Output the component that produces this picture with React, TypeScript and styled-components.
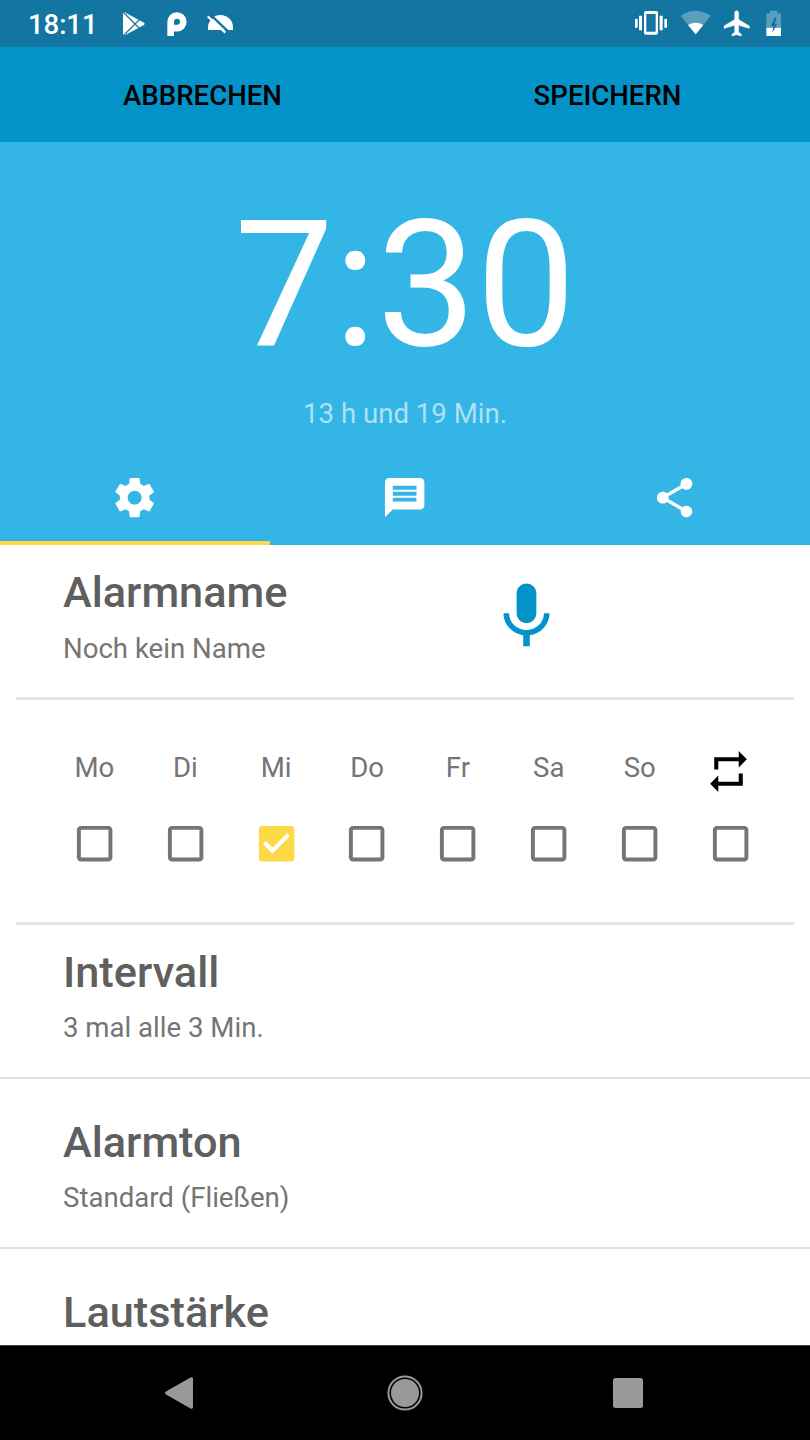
import React from "react";
import styled, { createGlobalStyle } from "styled-components";

const color = {
  status: "#1375a2",
  toolbar: "#0393c9",
  hero: "#33b5e6",
  accent: "#fdda45",
  title: "#5f5f5f",
  text: "#757575",
  divider: "#dedede",
  insetDivider: "#e4e4e4",
};

const GlobalStyle = createGlobalStyle`
  * { box-sizing: border-box; }
  body { margin: 0; background: #fff; font-family: Roboto, "Liberation Sans", sans-serif; }
  svg { display: block; flex: none; }
`;

const Screen = styled.div`
  width: 810px;
  height: 1440px;
  display: flex;
  flex-direction: column;
  overflow: hidden;
  background: #fff;
`;

const StatusBar = styled.header`
  height: 47px;
  flex: none;
  display: flex;
  justify-content: space-between;
  background: ${color.status};
  color: #fff;
`;

const StatusGroup = styled.div<{ $start?: number; $end?: number }>`
  display: flex;
  padding-left: ${(p) => p.$start ?? 0}px;
  padding-right: ${(p) => p.$end ?? 0}px;
`;

const Clock = styled.span`
  width: 92px;
  font-size: 27.6px;
  line-height: 50px;
  font-weight: 500;
  letter-spacing: -0.1px;
`;

const Toolbar = styled.div`
  height: 95px;
  flex: none;
  display: grid;
  grid-template-columns: 1fr 1fr;
  background: ${color.toolbar};
`;

const ToolbarButton = styled.button`
  border: 0;
  padding: 2px 0 0;
  background: none;
  color: #000;
  font: 500 27.6px/32px Roboto, sans-serif;
`;

const Hero = styled.section`
  height: 403px;
  flex: none;
  display: flex;
  flex-direction: column;
  align-items: center;
  background: ${color.hero};
`;

const AlarmTime = styled.div`
  margin-top: 39px;
  height: 208px;
  font-size: 177.2px;
  line-height: 208px;
  color: #fff;
`;

const Countdown = styled.div`
  margin-top: 9px;
  font-size: 27.6px;
  line-height: 32px;
  color: #ade1f6;
`;

const Tabs = styled.nav`
  width: 100%;
  margin-top: auto;
  display: grid;
  grid-template-columns: repeat(3, 1fr);
`;

const Tab = styled.div<{ $active?: boolean }>`
  height: 95px;
  display: flex;
  justify-content: center;
  padding-top: 24px;
  border-bottom: 4px solid ${(p) => (p.$active ? color.accent : "transparent")};
`;

const Content = styled.main`
  flex: 1;
  min-height: 0;
  overflow: hidden;
`;

const Row = styled.section<{ $height: number; $top: number; $inset?: boolean }>`
  height: ${(p) => p.$height}px;
  margin: 0 ${(p) => (p.$inset ? 16 : 0)}px;
  padding: ${(p) => p.$top}px ${(p) => (p.$inset ? 47 : 63)}px 0;
  display: flex;
  border-bottom: ${(p) => (p.$inset ? `3px solid ${color.insetDivider}` : `2px solid ${color.divider}`)};
`;

const RowText = styled.div<{ $width?: number }>`
  width: ${(p) => (p.$width ? `${p.$width}px` : "auto")};
`;

const RowTitle = styled.h2`
  margin: 0;
  font-size: 43.3px;
  line-height: 50px;
  font-weight: 500;
  color: ${color.title};
`;

const RowSummary = styled.p<{ $gap?: number }>`
  margin: ${(p) => p.$gap ?? 14}px 0 0;
  font-size: 27.6px;
  line-height: 32px;
  color: ${color.text};
`;

const MicSlot = styled.div`
  margin-top: 9px;
`;

const WeekGrid = styled.section`
  height: 225px;
  margin: 0 16px;
  padding: 44px 18px 0 33px;
  display: grid;
  grid-template-columns: repeat(8, 1fr);
  border-bottom: 3px solid ${color.insetDivider};
`;

const Day = styled.label`
  display: flex;
  flex-direction: column;
  align-items: center;
`;

const DayName = styled.span`
  height: 76px;
  padding-top: 8px;
  font-size: 27.6px;
  line-height: 32px;
  color: ${color.text};
`;

const RepeatSlot = styled.span`
  height: 76px;
  padding: 3px 5px 0 0;
`;

const NavBar = styled.footer`
  height: 95px;
  flex: none;
  padding: 0 70px 0 67px;
  display: grid;
  grid-template-columns: repeat(3, 1fr);
  place-items: center;
  background: #000;
  border-top: 1px solid #414545;
`;

const HomeButton = styled.div`
  padding: 0 0 1px 3px;
`;

const Material = ({ d, size = 47.3, fill = "#fff" }: { d: string; size?: number; fill?: string }) => (
  <svg width={size} height={size} viewBox="0 0 24 24">
    <path d={d} fill={fill} />
  </svg>
);

const paths = {
  settings:
    "M19.43 12.98c.04-.32.07-.64.07-.98s-.03-.66-.07-.98l2.11-1.65c.19-.15.24-.42.12-.64l-2-3.46c-.12-.22-.39-.3-.61-.22l-2.49 1c-.52-.4-1.08-.73-1.69-.98l-.38-2.65C14.46 2.18 14.25 2 14 2h-4c-.25 0-.46.18-.49.42l-.38 2.65c-.61.25-1.17.59-1.69.98l-2.49-1c-.23-.09-.49 0-.61.22l-2 3.46c-.13.22-.07.49.12.64l2.11 1.65c-.04.32-.07.65-.07.98s.03.66.07.98l-2.11 1.65c-.19.15-.24.42-.12.64l2 3.46c.12.22.39.3.61.22l2.49-1c.52.4 1.08.73 1.69.98l.38 2.65c.03.24.24.42.49.42h4c.25 0 .46-.18.49-.42l.38-2.65c.61-.25 1.17-.59 1.69-.98l2.49 1c.23.09.49 0 .61-.22l2-3.46c.12-.22.07-.49-.12-.64l-2.11-1.65zM12 15.5c-1.93 0-3.5-1.57-3.5-3.5s1.57-3.5 3.5-3.5 3.5 1.57 3.5 3.5-1.57 3.5-3.5 3.5z",
  message:
    "M20 2H4c-1.1 0-1.99.9-1.99 2L2 22l4-4h14c1.1 0 2-.9 2-2V4c0-1.1-.9-2-2-2zm-2 12H6v-2h12v2zm0-3H6V9h12v2zm0-3H6V6h12v2z",
  share:
    "M18 16.08c-.76 0-1.44.3-1.96.77L8.91 12.7c.05-.23.09-.46.09-.7s-.04-.47-.09-.7l7.05-4.11c.54.5 1.25.81 2.04.81 1.66 0 3-1.34 3-3s-1.34-3-3-3-3 1.34-3 3c0 .24.04.47.09.7L8.04 9.81C7.5 9.31 6.79 9 6 9c-1.66 0-3 1.34-3 3s1.34 3 3 3c.79 0 1.5-.31 2.04-.81l7.12 4.16c-.05.21-.08.43-.08.65 0 1.61 1.31 2.92 2.92 2.92s2.92-1.31 2.92-2.92-1.31-2.92-2.92-2.92z",
  mic: "M12 14c1.66 0 2.99-1.34 2.99-3L15 5c0-1.66-1.34-3-3-3S9 3.34 9 5v6c0 1.66 1.34 3 3 3zm5.3-3c0 3-2.54 5.1-5.3 5.1S6.7 14 6.7 11H5c0 3.41 2.72 6.23 6 6.72V21h2v-3.28c3.28-.48 6-3.3 6-6.72h-1.7z",
  repeat: "M7 7h10v3l4-4-4-4v3H5v6h2V7zm10 10H7v-3l-4 4 4 4v-3h12v-6h-2v4z",
  box: "M19 5v14H5V5h14m0-2H5c-1.1 0-2 .9-2 2v14c0 1.1.9 2 2 2h14c1.1 0 2-.9 2-2V5c0-1.1-.9-2-2-2z",
};

const Notifications = () => (
  <svg width="120" height="47" viewBox="360 0 360 141">
    <path d="M369 39q1-4 5-2l58 31q4 3 0 7l-58 31q-5 1-5-3z" fill="#fff" />
    <path d="M369 36l57 57M369 108l57-57" stroke={color.status} strokeWidth="3.500" />
    <path d="M512 108V65.500A19 19 0 1 1 531 84.500H518" fill="none" stroke="#fff" strokeWidth="20" />
    <path d="M624 90v-8c0-19 17-37 37-37 21 0 38 15 38 37v8z" fill="#fff" />
    <path d="M628 41l56 53" stroke={color.status} strokeWidth="7" />
    <path d="M622 42l16 15" stroke={color.status} strokeWidth="5" />
    <path d="M623 49l53 49" stroke="#fff" strokeWidth="6.500" />
  </svg>
);

const SystemIcons = () => (
  <svg width="160" height="47" viewBox="90 0 480 141">
    <g fill="#fff">
      <path d="M138 33h30q6 0 6 6v59q0 6-6 6h-30q-6 0-6-6V39q0-6 6-6zm1 9v53h28V42z" fillRule="evenodd" />
      <path d="M105 57h8v26h-8zM117 47h9v44h-9zM179 47h9v44h-9zM193 57h8v26h-8z" />
      <path d="M242 47q45-30 90 0l-45 56z" opacity=".3" />
      <path d="M264 75q23-14 46 0l-23 28z" />
      <g transform="translate(364 24.500) scale(4 3.800)">
        <path d="M21 16v-2l-8-5V3.500c0-.83-.67-1.500-1.500-1.500S10 2.670 10 3.500V9l-8 5v2l8-2.500V19l-2 1.500V22l3.500-1 3.500 1v-1.500L13 19v-5.500l8 2.500z" strokeLinejoin="round" stroke="#fff" strokeWidth=".3" />
      </g>
      <path d="M510 32h22v8h8q3 0 3 3v40h-44V43q0-3 3-3h8z" opacity=".3" />
      <path d="M499 83h44v22q0 3-3 3h-38q-3 0-3-3z" />
    </g>
    <path d="M525 51l-13 27h8l-3 20 15-27h-8l6-20z" fill={color.status} />
  </svg>
);

const Checkbox = ({ checked }: { checked?: boolean }) => (
  <svg width="47.300" height="47.300" viewBox="0 0 24 24">
    {checked ? (
      <>
        <rect x="3" y="3" width="18" height="18" rx="1.600" fill={color.accent} />
        <path d="M5.800 11.400l4.100 4.200L18 7.400" fill="none" stroke="#fff" strokeWidth="2.100" />
      </>
    ) : (
      <path d={paths.box} fill={color.text} />
    )}
  </svg>
);

const days = ["Mo", "Di", "Mi", "Do", "Fr", "Sa", "So"];

export default function App() {
  return (
    <>
      <GlobalStyle />
      <Screen>
        <StatusBar>
          <StatusGroup $start={28}>
            <Clock>18:11</Clock>
            <Notifications />
          </StatusGroup>
          <StatusGroup $end={20}>
            <SystemIcons />
          </StatusGroup>
        </StatusBar>
        <Toolbar>
          <ToolbarButton>ABBRECHEN</ToolbarButton>
          <ToolbarButton>SPEICHERN</ToolbarButton>
        </Toolbar>
        <Hero>
          <AlarmTime>7:30</AlarmTime>
          <Countdown>13 h und 19 Min.</Countdown>
          <Tabs>
            <Tab $active><Material d={paths.settings} /></Tab>
            <Tab><Material d={paths.message} /></Tab>
            <Tab><Material d={paths.share} /></Tab>
          </Tabs>
        </Hero>
        <Content>
          <Row $height={155} $top={23} $inset>
            <RowText $width={423.6}>
              <RowTitle>Alarmname</RowTitle>
              <RowSummary $gap={15}>Noch kein Name</RowSummary>
            </RowText>
            <MicSlot><Material d={paths.mic} size={79} fill={color.toolbar} /></MicSlot>
          </Row>
          <WeekGrid>
            {days.map((day) => (
              <Day key={day}>
                <DayName>{day}</DayName>
                <Checkbox checked={day === "Mi"} />
              </Day>
            ))}
            <Day>
              <RepeatSlot><Material d={paths.repeat} size={49} fill="#000" /></RepeatSlot>
              <Checkbox />
            </Day>
          </WeekGrid>
          <Row $height={154} $top={23}>
            <RowText>
              <RowTitle>Intervall</RowTitle>
              <RowSummary>3 mal alle 3 Min.</RowSummary>
            </RowText>
          </Row>
          <Row $height={170} $top={39}>
            <RowText>
              <RowTitle>Alarmton</RowTitle>
              <RowSummary>Standard (Fließen)</RowSummary>
            </RowText>
          </Row>
          <Row $height={170} $top={39}>
            <RowText>
              <RowTitle>Lautstärke</RowTitle>
            </RowText>
          </Row>
        </Content>
        <NavBar>
          <svg width="32" height="36" viewBox="0 0 32 36">
            <path d="M3 16.500L27.500 2.500q2.500-1 2.500 1.500v28q0 2.500-2.500 1.500L3 19.500q-2-1.500 0-3z" fill="#999" />
          </svg>
          <HomeButton>
            <svg width="36" height="36" viewBox="0 0 36 36">
              <circle cx="18" cy="18" r="16.600" fill="none" stroke="#999" strokeWidth="2" />
              <circle cx="18" cy="18" r="14" fill="#999" />
            </svg>
          </HomeButton>
          <svg width="30" height="30" viewBox="0 0 30 30">
            <rect width="30" height="30" rx="2.500" fill="#999" />
          </svg>
        </NavBar>
      </Screen>
    </>
  );
}
